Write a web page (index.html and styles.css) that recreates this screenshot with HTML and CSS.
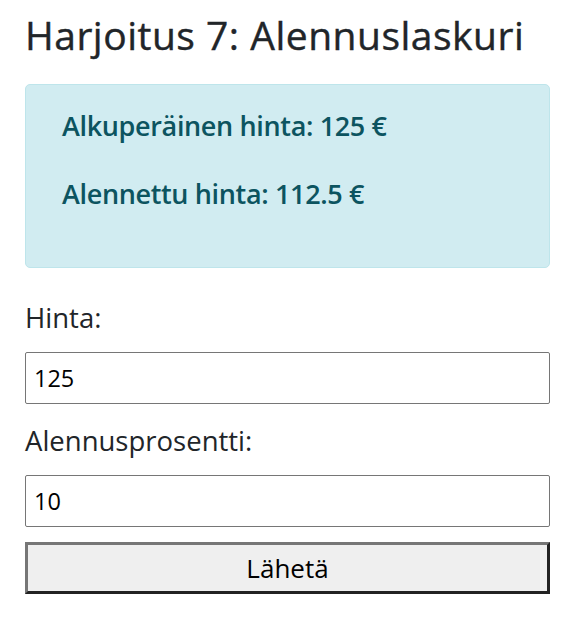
FILE: index.html
```html
<!DOCTYPE html>
<html lang="fi">
<head>
<meta charset="utf-8">
<title>Harjoitus 7: Alennuslaskuri</title>
<link rel="stylesheet" href="styles.css">
</head>
<body>
<div class="container">
  <h1 class="title">Harjoitus 7: Alennuslaskuri</h1>
  <div class="alert">
    <p class="alert-line">Alkuperäinen hinta: 125 €</p>
    <p class="alert-line">Alennettu hinta: 112.5 €</p>
  </div>
  <form class="form">
    <label class="label" for="hinta">Hinta:</label>
    <input class="input" id="hinta" type="text" value="125">
    <label class="label" for="ale">Alennusprosentti:</label>
    <input class="input" id="ale" type="text" value="10">
    <button class="button" type="button">Lähetä</button>
  </form>
</div>
</body>
</html>
```

FILE: styles.css
```css
* { box-sizing: border-box; }
html, body { margin: 0; padding: 0; background: #fff; }
body {
  font-family: "Open Sans", "Noto Sans", sans-serif;
  color: #212529;
}
.container {
  width: 525px;
  margin-left: 25px;
}
.title {
  margin: 0;
  padding-top: 12px;
  font-size: 39px;
  font-weight: 500;
  line-height: 46px;
  letter-spacing: 0.5px;
  -webkit-text-stroke: 0.4px #212529;
}
.alert {
  margin-top: 26px;
  height: 184px;
  background: #d1ecf1;
  border: 1px solid #bee5eb;
  border-radius: 5px;
  color: #0c5460;
  padding: 23px 36px 0;
}
.alert-line {
  margin: 0 0 32px;
  font-size: 27px;
  font-weight: 600;
  line-height: 36px;
  letter-spacing: -0.35px;
}
.form {
  display: flex;
  flex-direction: column;
  padding-top: 32px;
}
.label {
  font-size: 27.5px;
  line-height: 36px;
  margin-bottom: 16px;
}
.input {
  height: 52px;
  width: 525px;
  border: 1px solid #767676;
  border-radius: 2px;
  padding: 0 8px;
  font-family: inherit;
  font-size: 23.5px;
  color: #000;
  margin-bottom: 19px;
}
.button {
  height: 52px;
  width: 525px;
  margin-top: -4px;
  background: #efefef;
  border-style: solid;
  border-width: 3px;
  border-color: #767676 #222 #222 #767676;
  font-family: inherit;
  font-size: 26px;
  color: #000;
  padding: 0;
}
```
